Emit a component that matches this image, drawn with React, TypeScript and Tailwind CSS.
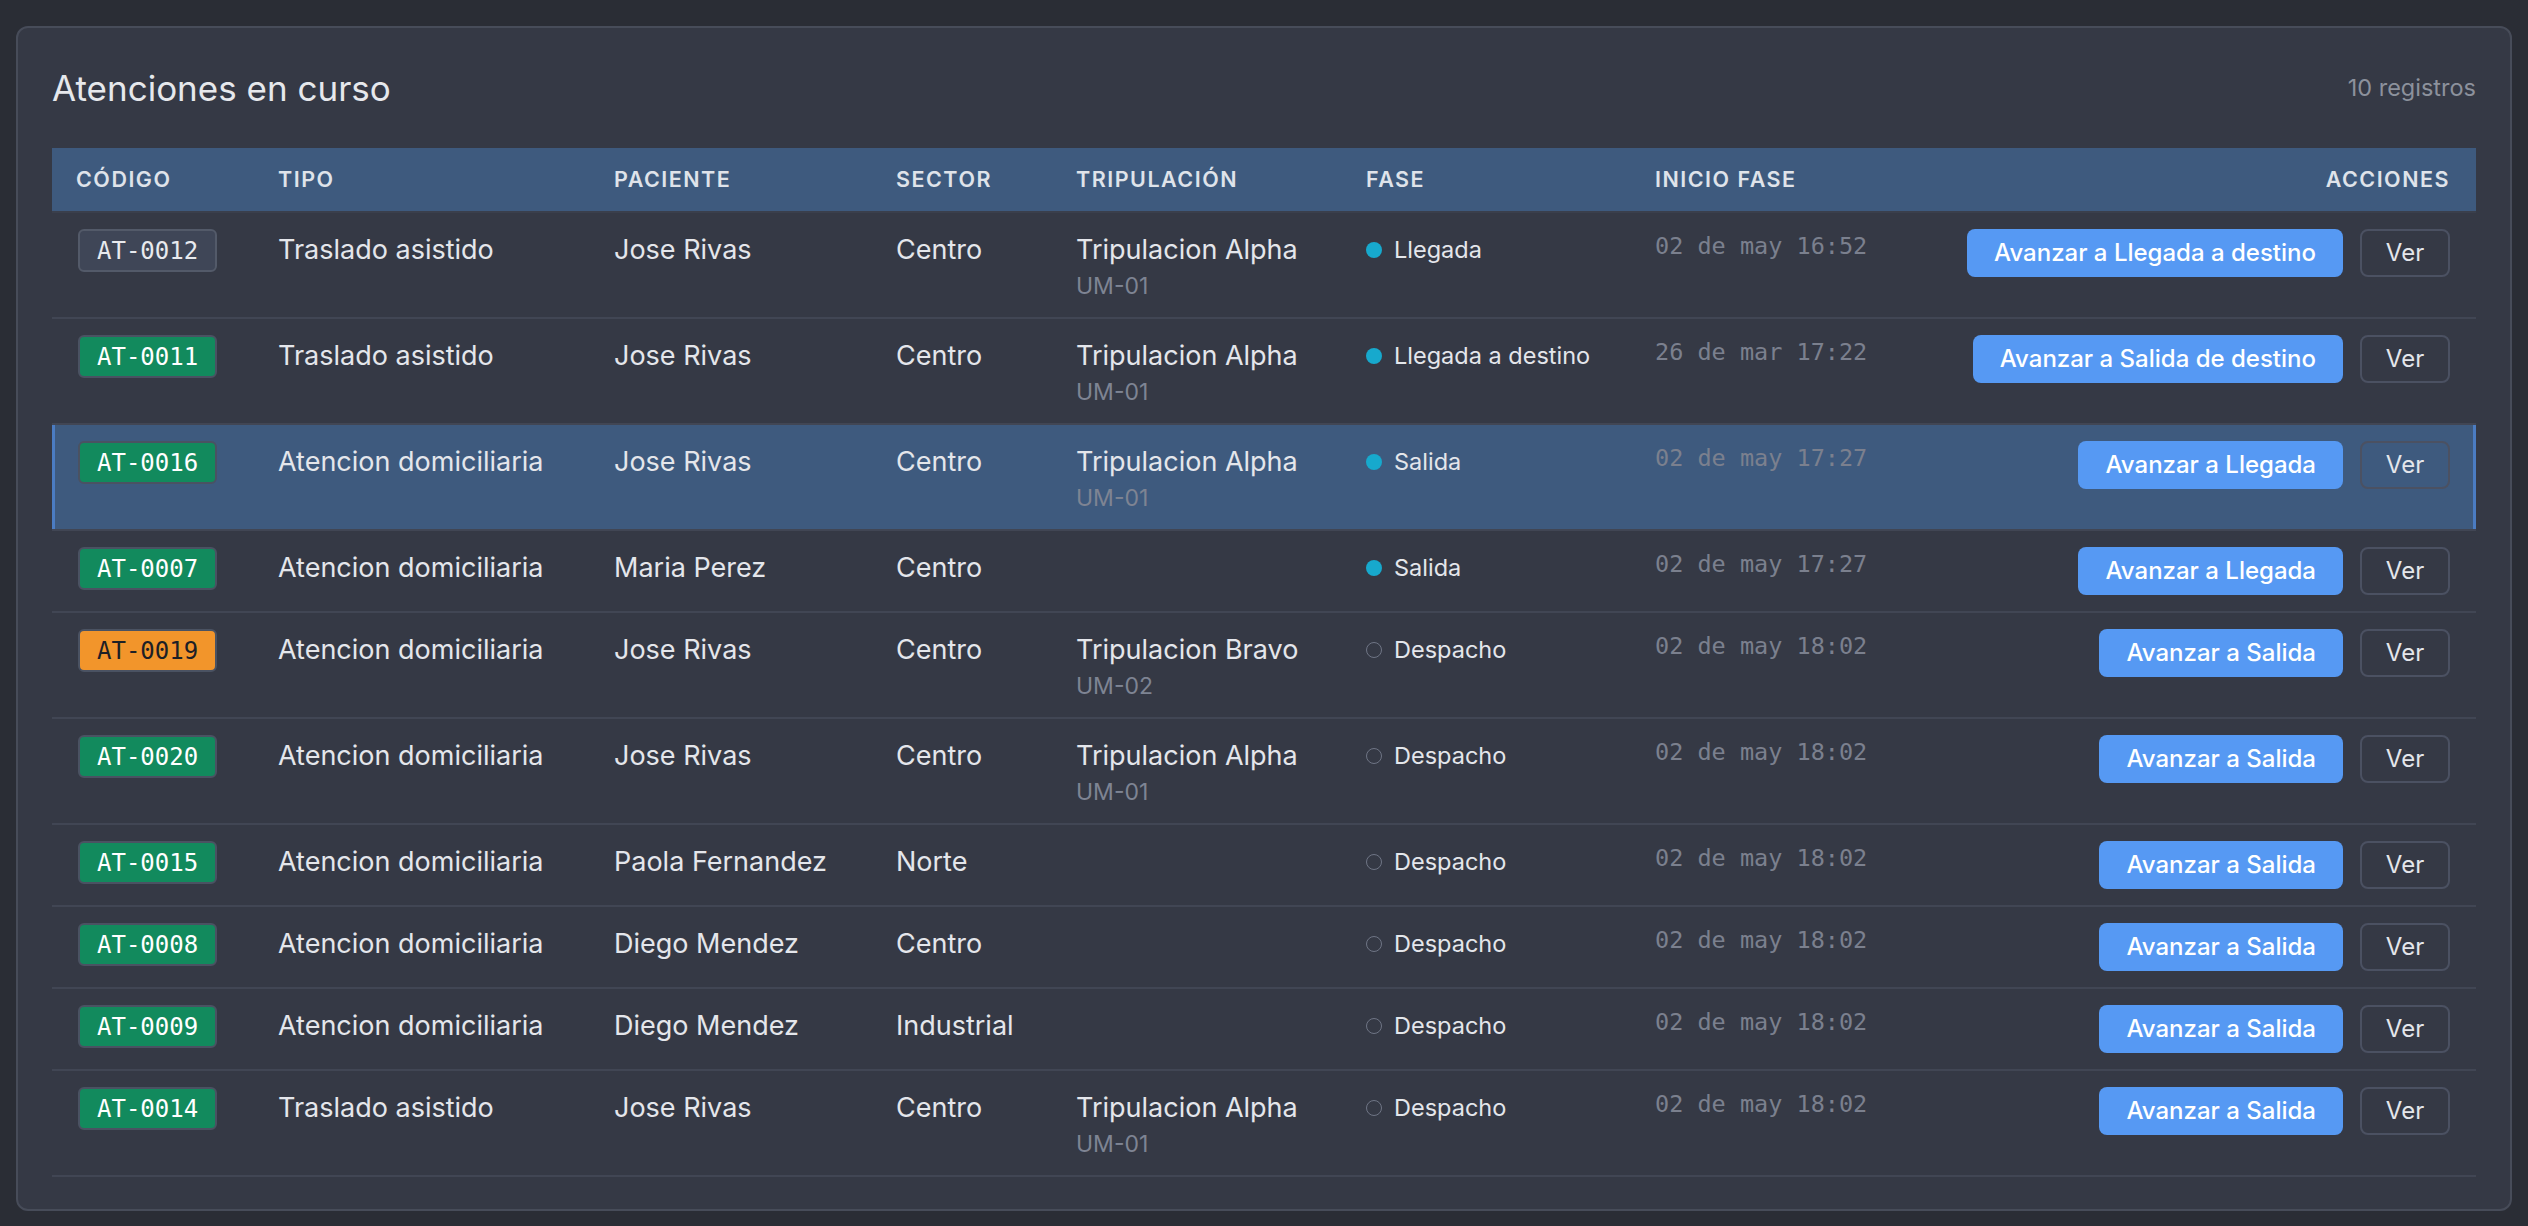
import React from "react";

type BadgeTone = "gray" | "green" | "orange";

type Atencion = {
  code: string;
  tone: BadgeTone;
  tipo: string;
  paciente: string;
  sector: string;
  crew?: string;
  unit?: string;
  fase: string;
  enCurso: boolean;
  inicio: string;
  action: string;
  selected?: boolean;
};

const atenciones: Atencion[] = [
  { code: "AT-0012", tone: "gray", tipo: "Traslado asistido", paciente: "Jose Rivas", sector: "Centro", crew: "Tripulacion Alpha", unit: "UM-01", fase: "Llegada", enCurso: true, inicio: "02 de may 16:52", action: "Avanzar a Llegada a destino" },
  { code: "AT-0011", tone: "green", tipo: "Traslado asistido", paciente: "Jose Rivas", sector: "Centro", crew: "Tripulacion Alpha", unit: "UM-01", fase: "Llegada a destino", enCurso: true, inicio: "26 de mar 17:22", action: "Avanzar a Salida de destino" },
  { code: "AT-0016", tone: "green", tipo: "Atencion domiciliaria", paciente: "Jose Rivas", sector: "Centro", crew: "Tripulacion Alpha", unit: "UM-01", fase: "Salida", enCurso: true, inicio: "02 de may 17:27", action: "Avanzar a Llegada", selected: true },
  { code: "AT-0007", tone: "green", tipo: "Atencion domiciliaria", paciente: "Maria Perez", sector: "Centro", fase: "Salida", enCurso: true, inicio: "02 de may 17:27", action: "Avanzar a Llegada" },
  { code: "AT-0019", tone: "orange", tipo: "Atencion domiciliaria", paciente: "Jose Rivas", sector: "Centro", crew: "Tripulacion Bravo", unit: "UM-02", fase: "Despacho", enCurso: false, inicio: "02 de may 18:02", action: "Avanzar a Salida" },
  { code: "AT-0020", tone: "green", tipo: "Atencion domiciliaria", paciente: "Jose Rivas", sector: "Centro", crew: "Tripulacion Alpha", unit: "UM-01", fase: "Despacho", enCurso: false, inicio: "02 de may 18:02", action: "Avanzar a Salida" },
  { code: "AT-0015", tone: "green", tipo: "Atencion domiciliaria", paciente: "Paola Fernandez", sector: "Norte", fase: "Despacho", enCurso: false, inicio: "02 de may 18:02", action: "Avanzar a Salida" },
  { code: "AT-0008", tone: "green", tipo: "Atencion domiciliaria", paciente: "Diego Mendez", sector: "Centro", fase: "Despacho", enCurso: false, inicio: "02 de may 18:02", action: "Avanzar a Salida" },
  { code: "AT-0009", tone: "green", tipo: "Atencion domiciliaria", paciente: "Diego Mendez", sector: "Industrial", fase: "Despacho", enCurso: false, inicio: "02 de may 18:02", action: "Avanzar a Salida" },
  { code: "AT-0014", tone: "green", tipo: "Traslado asistido", paciente: "Jose Rivas", sector: "Centro", crew: "Tripulacion Alpha", unit: "UM-01", fase: "Despacho", enCurso: false, inicio: "02 de may 18:02", action: "Avanzar a Salida" },
];

const badgeTone: Record<BadgeTone, string> = {
  gray: "bg-[#3f4657] border-[#535a69] text-[#e8eaee]",
  green: "bg-[#128a5d] border-[#4a5262] text-white",
  orange: "bg-[#f2952b] border-[#4a5262] text-[#1d2026]",
};

const headers = ["Código", "Tipo", "Paciente", "Sector", "Tripulación", "Fase", "Inicio fase"];

function CodeBadge({ code, tone }: { code: string; tone: BadgeTone }) {
  return (
    <span
      className={`ml-[2px] inline-flex h-[43px] items-center rounded-[6px] border-2 px-[17px] font-['DejaVu_Sans_Mono',monospace] text-[24px] leading-none ${badgeTone[tone]}`}
    >
      {code}
    </span>
  );
}

function FaseCell({ fase, enCurso }: { fase: string; enCurso: boolean }) {
  return (
    <div className="flex h-[42px] items-center gap-[12px]">
      {enCurso ? (
        <span className="h-[16px] w-[16px] shrink-0 rounded-full bg-[#17a9cd]" />
      ) : (
        <span className="h-[16px] w-[16px] shrink-0 rounded-full border-[1.5px] border-[#6f7585]" />
      )}
      <span className="text-[23.5px] text-[#e4e6eb]">{fase}</span>
    </div>
  );
}

export default function App() {
  return (
    <div className="min-h-screen bg-[#2a2d35] px-4 pb-4 pt-[26px] font-['Inter',sans-serif] text-[#e4e6eb]">
      <section className="rounded-[12px] border-2 border-[#474c59] bg-[#353945] px-[34px] pb-[32px] pt-[36px]">
        <div className="mb-9 flex h-[48px] items-center justify-between">
          <h2 className="text-[35px] font-normal leading-[48px] text-[#e6e8ec]">Atenciones en curso</h2>
          <span className="text-[23.5px] text-[#8c919c]">10 registros</span>
        </div>

        <table className="w-full table-fixed">
          <colgroup>
            <col className="w-[202px]" />
            <col className="w-[336px]" />
            <col className="w-[282px]" />
            <col className="w-[180px]" />
            <col className="w-[290px]" />
            <col className="w-[289px]" />
            <col className="w-[291px]" />
            <col />
          </colgroup>
          <thead>
            <tr className="bg-[#3e5a7e]">
              {headers.map((h) => (
                <th
                  key={h}
                  className="h-[64px] border-b-2 border-[#3a3f4c] px-6 text-left align-middle text-[21.5px] font-semibold uppercase tracking-[0.07em] text-[#dfe3ea]"
                >
                  {h}
                </th>
              ))}
              <th className="h-[64px] border-b-2 border-[#3a3f4c] pl-6 pr-[26px] text-right align-middle text-[21.5px] font-semibold uppercase tracking-[0.07em] text-[#dfe3ea]">
                Acciones
              </th>
            </tr>
          </thead>
          <tbody>
            {atenciones.map((a) => {
              const cell = `border-b-2 border-[#414654] px-6 py-4 align-top whitespace-nowrap ${a.selected ? "bg-[#3e5a7e]" : ""}`;
              return (
                <tr key={a.code}>
                  <td className={`${cell} ${a.selected ? "shadow-[inset_3px_0_0_#4b7cc2]" : ""}`}>
                    <CodeBadge code={a.code} tone={a.tone} />
                  </td>
                  <td className={`${cell} text-[27px] leading-[42px]`}>{a.tipo}</td>
                  <td className={`${cell} text-[27px] leading-[42px]`}>{a.paciente}</td>
                  <td className={`${cell} text-[27px] leading-[42px]`}>{a.sector}</td>
                  <td className={cell}>
                    {a.crew && (
                      <div>
                        <div className="text-[27px] leading-[42px]">{a.crew}</div>
                        <div className="text-[23px] leading-[30px] text-[#7e8493]">{a.unit}</div>
                      </div>
                    )}
                  </td>
                  <td className={cell}>
                    <FaseCell fase={a.fase} enCurso={a.enCurso} />
                  </td>
                  <td className={`${cell} font-['DejaVu_Sans_Mono',monospace] text-[23.5px] leading-[35px] text-[#7b808e]`}>
                    {a.inicio}
                  </td>
                  <td
                    className={`border-b-2 border-[#414654] py-4 pl-6 pr-[26px] align-top ${a.selected ? "bg-[#3e5a7e] shadow-[inset_-3px_0_0_#4b7cc2]" : ""}`}
                  >
                    <div className="flex justify-end gap-[17px]">
                      <button className="h-[48px] whitespace-nowrap rounded-[8px] bg-[#5699f3] px-[27px] text-[24px] font-medium text-white">
                        {a.action}
                      </button>
                      <button className="h-[48px] w-[90px] rounded-[8px] border-2 border-[#4b5162] text-[24px] text-[#e4e6eb]">
                        Ver
                      </button>
                    </div>
                  </td>
                </tr>
              );
            })}
          </tbody>
        </table>
      </section>
    </div>
  );
}
